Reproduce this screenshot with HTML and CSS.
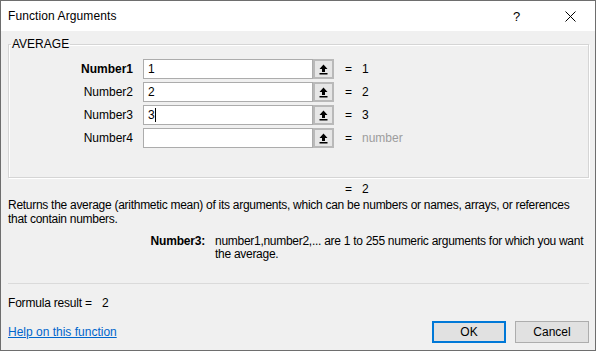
FILE: index.html
```html
<!DOCTYPE html>
<html>
<head>
  <meta charset="UTF-8">
  <title>Function Arguments</title>
  <link rel="stylesheet" href="styles.css">
</head>
<body>
  <div class="dialog">
    <div class="titlebar">
      <span class="title">Function Arguments</span>
      <span class="help-btn">?</span>
      <span class="close-btn">
        <svg width="11" height="11" viewBox="0 0 11 11">
          <path d="M0.5 0.5 L10.5 10.5 M10.5 0.5 L0.5 10.5" stroke="#000" stroke-width="1" fill="none"/>
        </svg>
      </span>
    </div>

    <fieldset class="group">
      <legend>AVERAGE</legend>

      <div class="arg-row">
        <span class="arg-label bold">Number1</span>
        <div class="arg-input">1</div>
        <span class="ref-btn"><svg width="9" height="11" viewBox="0 0 9 11"><path d="M4.5 0.5 L8.5 5 H6 V8 H3 V5 H0.5 Z" fill="#000"/><rect x="0.5" y="9" width="8" height="1.5" fill="#000"/></svg></span>
        <span class="eq">=</span>
        <span class="val">1</span>
      </div>

      <div class="arg-row">
        <span class="arg-label">Number2</span>
        <div class="arg-input">2</div>
        <span class="ref-btn"><svg width="9" height="11" viewBox="0 0 9 11"><path d="M4.5 0.5 L8.5 5 H6 V8 H3 V5 H0.5 Z" fill="#000"/><rect x="0.5" y="9" width="8" height="1.5" fill="#000"/></svg></span>
        <span class="eq">=</span>
        <span class="val">2</span>
      </div>

      <div class="arg-row">
        <span class="arg-label">Number3</span>
        <div class="arg-input">3<span class="caret"></span></div>
        <span class="ref-btn"><svg width="9" height="11" viewBox="0 0 9 11"><path d="M4.5 0.5 L8.5 5 H6 V8 H3 V5 H0.5 Z" fill="#000"/><rect x="0.5" y="9" width="8" height="1.5" fill="#000"/></svg></span>
        <span class="eq">=</span>
        <span class="val">3</span>
      </div>

      <div class="arg-row">
        <span class="arg-label">Number4</span>
        <div class="arg-input"></div>
        <span class="ref-btn"><svg width="9" height="11" viewBox="0 0 9 11"><path d="M4.5 0.5 L8.5 5 H6 V8 H3 V5 H0.5 Z" fill="#000"/><rect x="0.5" y="9" width="8" height="1.5" fill="#000"/></svg></span>
        <span class="eq">=</span>
        <span class="val muted">number</span>
      </div>
    </fieldset>

    <div class="func-result">
      <span class="eq">=</span>
      <span class="val">2</span>
    </div>

    <p class="desc">Returns the average (arithmetic mean) of its arguments, which can be numbers or names, arrays, or references that contain numbers.</p>

    <div class="arg-help">
      <span class="arg-help-name">Number3:</span>
      <span class="arg-help-text">number1,number2,... are 1 to 255 numeric arguments for which you want the average.</span>
    </div>

    <div class="footer">
      <div class="formula-result">Formula result = <span class="formula-val">2</span></div>
      <div class="footer-bottom">
        <a class="help-link" href="#">Help on this function</a>
        <div class="buttons">
          <button class="btn btn-default">OK</button>
          <button class="btn">Cancel</button>
        </div>
      </div>
    </div>
  </div>
</body>
</html>
```

FILE: styles.css
```css
/* Excel style "Function Arguments" dialog */
html, body {
  margin: 0;
  padding: 0;
}

body {
  font-family: "Liberation Sans", Arial, sans-serif;
  font-size: 12px;
  color: #000;
  background: #f0f0f0;
}

.dialog {
  width: 596px;
  height: 351px;
  box-sizing: border-box;
  border: 1px solid #6e6e6e;
  background-color: #f0f0f0;
  display: flex;
  flex-direction: column;
}

.titlebar {
  height: 30px;
  background: #fff;
  display: flex;
  align-items: center;
  padding-left: 7px;
  flex-shrink: 0;
}

.title {
  flex: 1;
  font-size: 12px;
  letter-spacing: 0.1px;
}

.help-btn {
  width: 14px;
  margin-right: 38px;
  font-size: 13px;
}

.close-btn {
  width: 11px;
  height: 11px;
  margin-right: 19px;
  display: flex;
}

/* group box */
.group {
  margin: 6px 6px 0 7px;
  padding: 7px 0 26px 0;
  border: 1px solid #d5d5d5;
  box-shadow: 1px 1px 0 #fff, inset 1px 1px 0 #fff;
}

.group legend {
  margin-left: 2px;
  padding: 0 1px;
  line-height: 15px;
}

.arg-row {
  display: flex;
  align-items: center;
  height: 20px;
  margin-bottom: 3px;
}

.arg-label {
  width: 124px;
  text-align: right;
  margin-right: 10px;
}

.bold {
  font-weight: bold;
}

.arg-input {
  width: 170px;
  height: 20px;
  box-sizing: border-box;
  border: 1px solid #acacac;
  background: #fff;
  padding-left: 4px;
  line-height: 18px;
}

.caret {
  display: inline-block;
  width: 1px;
  height: 14px;
  background: #000;
  vertical-align: -3px;
}

.ref-btn {
  width: 21px;
  height: 20px;
  box-sizing: border-box;
  border: 2px solid #b9b9b9;
  background: #e6e6e6;
  display: flex;
  align-items: center;
  justify-content: center;
}

.eq {
  margin-left: 11px;
  width: 17px;
}

.muted {
  color: #9d9d9d;
}

.func-result {
  display: flex;
  margin-top: 4px;
  padding-left: 333px;
  line-height: 15px;
}

.desc {
  margin: 1px 0 0 7px;
  width: 562px;
  line-height: 14px;
  letter-spacing: -0.28px;
}

.arg-help {
  display: flex;
  margin-top: 9px;
  line-height: 13px;
}

.arg-help-name {
  width: 204px;
  text-align: right;
  font-weight: bold;
  flex-shrink: 0;
  letter-spacing: -0.2px;
}

.arg-help-text {
  margin-left: 10px;
  width: 380px;
  letter-spacing: -0.28px;
}

.footer {
  margin: auto 6px 0 7px;
  border-top: 1px solid #dadada;
  padding-bottom: 7px;
}

.formula-result {
  margin-top: 12px;
  line-height: 15px;
  letter-spacing: -0.2px;
}

.formula-val {
  margin-left: 7px;
}

.footer-bottom {
  display: flex;
  align-items: center;
  justify-content: space-between;
  margin-top: 10px;
}

.help-link {
  color: #0066cc;
  text-decoration: underline;
}

.buttons {
  display: flex;
  gap: 9px;
}

.btn {
  width: 74px;
  height: 22px;
  box-sizing: border-box;
  border: 1px solid #adadad;
  background: #e1e1e1;
  font-family: "Liberation Sans", Arial, sans-serif;
  font-size: 12px;
  padding: 0;
}

.btn-default {
  border: 2px solid #0078d7;
}
```
